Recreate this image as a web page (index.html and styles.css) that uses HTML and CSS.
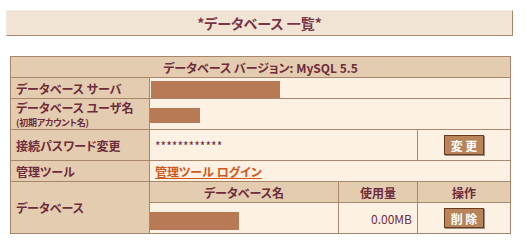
FILE: index.html
```html
<!DOCTYPE html>
<html lang="ja">
<head>
    <meta charset="UTF-8">
    <title>データベース一覧</title>
    <link rel="stylesheet" href="styles.css">
</head>
<body>
    <div class="page-title">*データベース 一覧*</div>

    <table class="db-table">
        <colgroup>
            <col class="col-label">
            <col class="col-name">
            <col class="col-size">
            <col class="col-ops">
        </colgroup>
        <tr class="row-short">
            <th class="version" colspan="4">データベース バージョン: MySQL 5.5</th>
        </tr>
        <tr class="row-short">
            <th class="label">データベース サーバ</th>
            <td class="value" colspan="3"><span class="masked mask-server"></span></td>
        </tr>
        <tr class="row-tall">
            <th class="label two-line">
                <span class="main">データベース ユーザ名</span>
                <span class="sub">(初期アカウント名)</span>
            </th>
            <td class="value flush" colspan="3"><span class="masked mask-user"></span></td>
        </tr>
        <tr class="row-tall">
            <th class="label">接続パスワード変更</th>
            <td class="value" colspan="2">************</td>
            <td class="action"><button class="btn">変 更</button></td>
        </tr>
        <tr class="row-short">
            <th class="label">管理ツール</th>
            <td class="value" colspan="3"><a class="tool-link" href="#">管理ツール ログイン</a></td>
        </tr>
        <tr class="row-short">
            <th class="label" rowspan="2">データベース</th>
            <th class="head">データベース名</th>
            <th class="head">使用量</th>
            <th class="head">操作</th>
        </tr>
        <tr class="row-tall">
            <td class="value flush"><span class="masked mask-db"></span></td>
            <td class="size">0.00MB</td>
            <td class="action"><button class="btn">削 除</button></td>
        </tr>
    </table>
</body>
</html>
```

FILE: styles.css
```css
* {
    margin: 0;
    padding: 0;
    box-sizing: border-box;
}

body {
    font-family: "Noto Sans CJK JP", "DejaVu Sans", sans-serif;
    font-feature-settings: "palt";
    font-size: 12px;
    color: #6e2c3c;
    background: white;
    padding: 10px 0 0 6px;
}

.page-title {
    width: 507px;
    height: 26px;
    line-height: 24px;
    text-align: center;
    font-size: 14px;
    font-weight: bold;
    color: #7a3546;
    background: #f1e4d4;
    border-top: 1px solid #f4ebe0;
    border-left: 1px solid #f4ebe0;
    border-right: 1px solid #a8866c;
    border-bottom: 1px solid #a8866c;
}

.db-table {
    margin: 20px 0 0 4px;
    width: 500px;
    table-layout: fixed;
    border-collapse: separate;
    border-spacing: 0;
    border-top: 1px solid #a8866c;
    border-left: 1px solid #a8866c;
}

.col-label { width: 139px; }
.col-name  { width: 189px; }
.col-size  { width: 79px; }
.col-ops   { width: 93px; }

.db-table th,
.db-table td {
    border-right: 1px solid #a8866c;
    border-bottom: 1px solid #a8866c;
    padding: 0 5px;
    vertical-align: middle;
    white-space: nowrap;
    overflow: hidden;
}

.row-short { height: 21px; }
.row-tall  { height: 31px; }

.db-table th {
    background: #e3ccb0;
    font-weight: bold;
}

.version,
.head {
    text-align: center;
}

.label {
    text-align: left;
}

.two-line .main {
    display: block;
    line-height: 17px;
}

.two-line .sub {
    display: block;
    font-size: 9px;
    line-height: 13px;
    letter-spacing: -0.2px;
}

.value {
    background: #fdf1e3;
    text-align: left;
}

.value.flush {
    padding-left: 0;
}

.size {
    background: #fdf1e3;
    text-align: right;
}

.action {
    background: #fdf1e3;
    text-align: center;
}

.masked {
    display: inline-block;
    vertical-align: middle;
    background: #b87955;
}

.mask-server {
    width: 129px;
    height: 17px;
    margin-left: -4px;
}

.mask-user {
    width: 50px;
    height: 15px;
}

.mask-db {
    width: 89px;
    height: 18px;
    margin-top: 6px;
}

.tool-link {
    color: #d2561a;
    font-weight: bold;
    text-decoration: underline;
}

.btn {
    width: 40px;
    height: 20px;
    font-family: inherit;
    font-size: 12px;
    font-weight: bold;
    color: white;
    background: #b8845a;
    border: 1px solid #6b3a1e;
    box-shadow: 1px 1px 0 #9a8f88;
    cursor: pointer;
}
```
